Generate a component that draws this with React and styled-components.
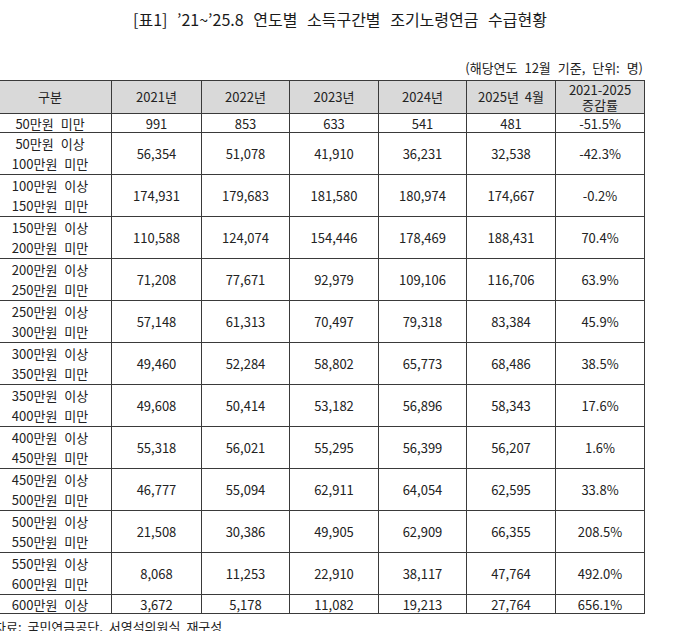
import React from 'react';
import styled, { createGlobalStyle } from 'styled-components';

const GlobalStyle = createGlobalStyle`
  html, body {
    margin: 0;
    padding: 0;
    background: #ffffff;
  }

  body {
    width: 680px;
    height: 631px;
    overflow: hidden;
    font-family: 'Noto Sans CJK KR', 'Noto Sans', sans-serif;
    color: #222;
  }
`;

const Page = styled.div`
  display: flex;
  flex-direction: column;
  width: 680px;
`;

const Title = styled.h1`
  margin: 8px 0 0;
  font-size: 16px;
  font-weight: 400;
  line-height: 22px;
  text-align: center;
  word-spacing: 6px;
  color: #1a1a1a;
`;

const Unit = styled.div`
  margin: 29px 37px 0 0;
  font-size: 13px;
  line-height: 18px;
  text-align: right;
  word-spacing: 4px;
  color: #222;
`;

const Table = styled.table`
  margin: 3px 0 0 -12px;
  width: 656px;
  border-collapse: collapse;
  table-layout: fixed;
  font-size: 13px;
`;

const Col = styled.col`
  width: ${({ $w }) => $w}px;
`;

const Row = styled.tr`
  height: ${({ $h }) => $h}px;
`;

const Head = styled.th`
  padding: 0;
  border: 1px solid #3a3a3a;
  background: #d9d9d9;
  font-weight: 400;
  line-height: ${({ $tight }) => ($tight ? '15px' : '20px')};
  text-align: center;
  vertical-align: middle;
  word-spacing: 3px;
`;

const Cell = styled.td`
  padding: 0;
  border: 1px solid #3a3a3a;
  line-height: 17px;
  text-align: center;
  vertical-align: middle;
  white-space: nowrap;
`;

const Label = styled(Cell)`
  line-height: ${({ $double }) => ($double ? '20px' : '17px')};
  word-spacing: 4px;
`;

const Source = styled.div`
  margin: 4px 0 0 -6px;
  font-size: 13px;
  line-height: 18px;
  word-spacing: 3px;
`;

const years = ['2021년', '2022년', '2023년', '2024년', '2025년 4월'];

const rows = [
  ['50만원 미만', null, '991', '853', '633', '541', '481', '-51.5%'],
  ['50만원 이상', '100만원 미만', '56,354', '51,078', '41,910', '36,231', '32,538', '-42.3%'],
  ['100만원 이상', '150만원 미만', '174,931', '179,683', '181,580', '180,974', '174,667', '-0.2%'],
  ['150만원 이상', '200만원 미만', '110,588', '124,074', '154,446', '178,469', '188,431', '70.4%'],
  ['200만원 이상', '250만원 미만', '71,208', '77,671', '92,979', '109,106', '116,706', '63.9%'],
  ['250만원 이상', '300만원 미만', '57,148', '61,313', '70,497', '79,318', '83,384', '45.9%'],
  ['300만원 이상', '350만원 미만', '49,460', '52,284', '58,802', '65,773', '68,486', '38.5%'],
  ['350만원 이상', '400만원 미만', '49,608', '50,414', '53,182', '56,896', '58,343', '17.6%'],
  ['400만원 이상', '450만원 미만', '55,318', '56,021', '55,295', '56,399', '56,207', '1.6%'],
  ['450만원 이상', '500만원 미만', '46,777', '55,094', '62,911', '64,054', '62,595', '33.8%'],
  ['500만원 이상', '550만원 미만', '21,508', '30,386', '49,905', '62,909', '66,355', '208.5%'],
  ['550만원 이상', '600만원 미만', '8,068', '11,253', '22,910', '38,117', '47,764', '492.0%'],
  ['600만원 이상', null, '3,672', '5,178', '11,082', '19,213', '27,764', '656.1%'],
];

const widths = [123, 90, 88, 89, 88, 89, 89];

export default function App() {
  return (
    <Page>
      <GlobalStyle />
      <Title>[표1] ’21~’25.8 연도별 소득구간별 조기노령연금 수급현황</Title>
      <Unit>(해당연도 12월 기준, 단위: 명)</Unit>
      <Table>
        <colgroup>
          {widths.map((w, i) => (
            <Col key={i} $w={w} />
          ))}
        </colgroup>
        <thead>
          <Row $h={33}>
            <Head>구분</Head>
            {years.map((y) => (
              <Head key={y}>{y}</Head>
            ))}
            <Head $tight>
              2021-2025
              <br />
              증감률
            </Head>
          </Row>
        </thead>
        <tbody>
          {rows.map(([from, to, ...values]) => (
            <Row key={from} $h={to ? 42 : 19}>
              <Label $double={!!to}>
                {from}
                {to && <br />}
                {to}
              </Label>
              {values.map((v, i) => (
                <Cell key={i}>{v}</Cell>
              ))}
            </Row>
          ))}
        </tbody>
      </Table>
      <Source>자료: 국민연금공단, 서영석의원실 재구성</Source>
    </Page>
  );
}
